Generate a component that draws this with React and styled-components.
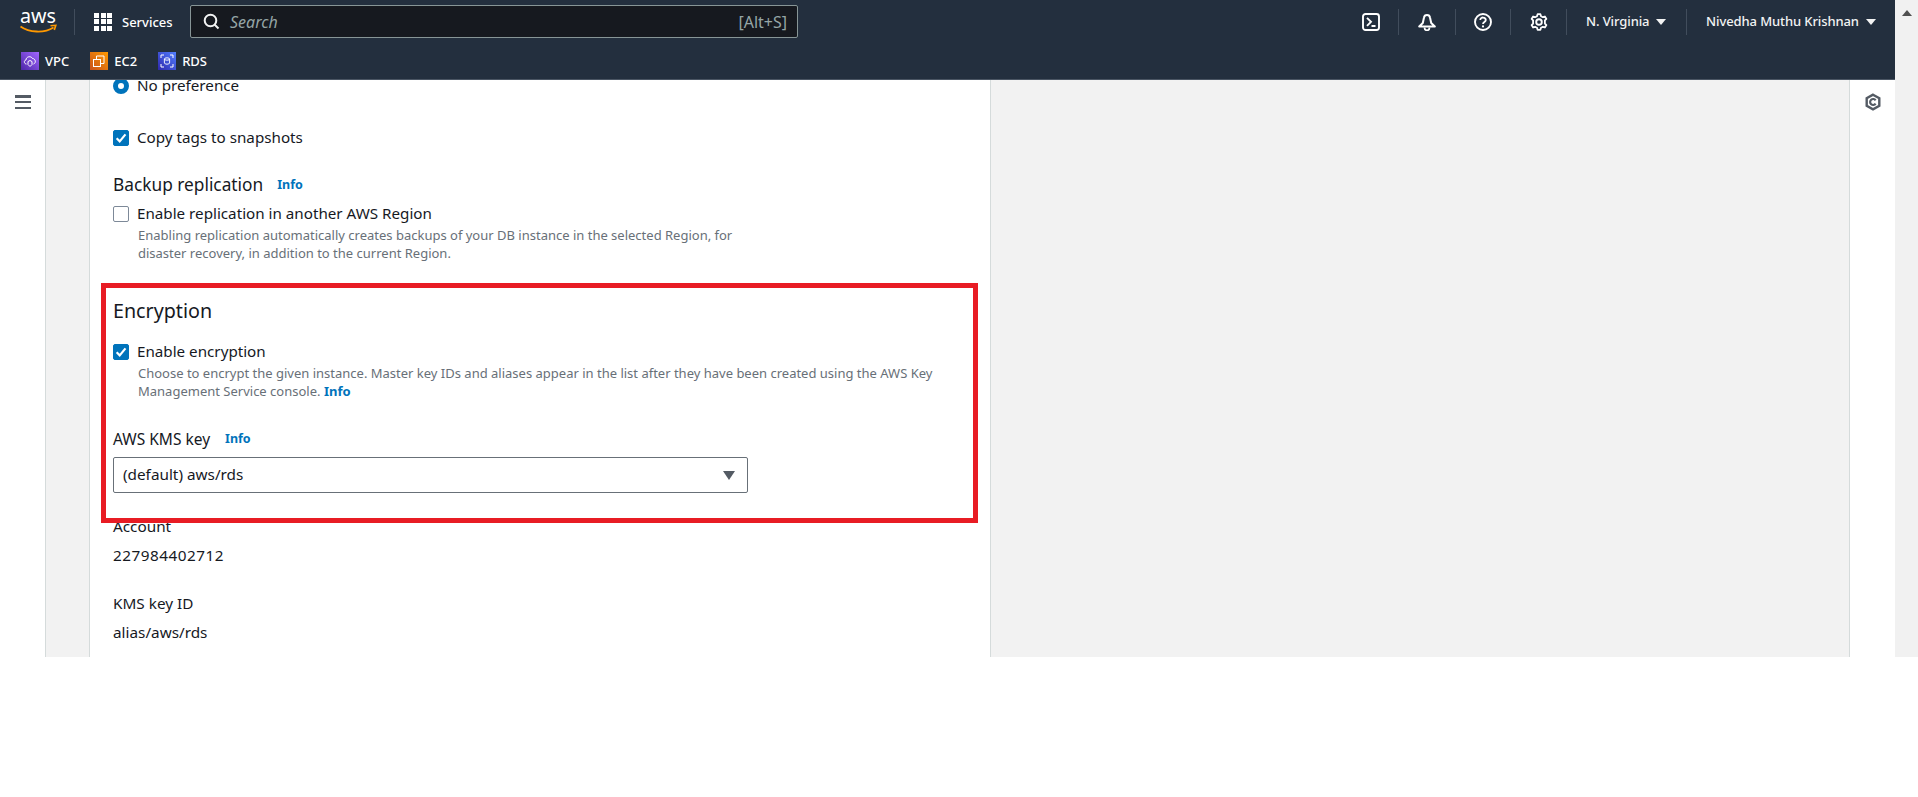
import React from "react";
import styled, { createGlobalStyle } from "styled-components";

const Global = createGlobalStyle`
  html, body { margin: 0; padding: 0; background: #fff; overflow: hidden; }
  * { box-sizing: border-box; }
  body { font-family: "Noto Sans", "Open Sans", sans-serif; font-size: 15.2px; color: #16191f; }
`;

const Frame = styled.div`
  display: flex;
  width: 1918px;
  height: 657px;
  overflow: hidden;
  background: #fff;
`;
const Viewport = styled.div`
  flex: 1;
  display: flex;
  flex-direction: column;
  min-width: 0;
`;
const Scrollbar = styled.div`
  width: 23px;
  background: #f1f1f1;
  display: flex;
  justify-content: center;
  padding-top: 10px;
`;
const ScrollArrow = styled.div`
  width: 0;
  height: 0;
  border-left: 5px solid transparent;
  border-right: 5px solid transparent;
  border-bottom: 6px solid #505050;
`;
const Header = styled.header`
  background: #232f3e;
  height: 80px;
  border-bottom: 1px solid #4a5563;
  color: #fff;
  display: flex;
  flex-direction: column;
  flex: none;
`;
const TopRow = styled.div`
  height: 44px;
  display: flex;
  align-items: center;
`;
const Logo = styled.div`
  width: 74px;
  padding-left: 20px;
  display: flex;
  align-items: center;
  height: 100%;
`;
const Sep = styled.div`
  width: 1px;
  height: 26px;
  background: #414d5c;
  flex: none;
`;
const ServicesBtn = styled.div`
  display: flex;
  align-items: center;
  gap: 10px;
  margin-left: 19px;
  width: 96px;
  font-size: 13px;
  font-weight: 500;
`;
const GridIcon = styled.div`
  display: grid;
  grid-template-columns: repeat(3, 5px);
  grid-auto-rows: 5px;
  gap: 1.5px;
  i { background: #fff; display: block; }
`;
const SearchBox = styled.div`
  width: 608px;
  height: 33px;
  background: #16191f;
  border: 1px solid #879596;
  border-radius: 2px;
  display: flex;
  align-items: center;
  padding: 0 10px 0 12px;
  color: #95a5a6;
  font-size: 16px;
`;
const SearchHint = styled.span`
  font-style: italic;
  margin-left: 10px;
  flex: 1;
`;
const RightTools = styled.div`
  margin-left: auto;
  display: flex;
  align-items: center;
  height: 100%;
`;
const ToolBtn = styled.div`
  width: ${(p) => p.$w}px;
  display: flex;
  justify-content: center;
  align-items: center;
`;
const MenuBtn = styled.div`
  display: flex;
  align-items: center;
  gap: 7px;
  padding-left: 19px;
  width: ${(p) => p.$w}px;
  font-size: 13px;
  font-weight: 500;
  letter-spacing: -0.1px;
  color: #f2f3f3;
  margin-top: -2px;
`;
const Caret = styled.span`
  width: 0;
  height: 0;
  border-left: 5px solid transparent;
  border-right: 5px solid transparent;
  border-top: 6px solid #f2f3f3;
  margin-top: 2px;
`;
const Favs = styled.div`
  display: flex;
  align-items: center;
  padding-left: 21px;
  height: 36px;
  font-size: 13px;
  font-weight: 500;
`;
const Fav = styled.div`
  display: flex;
  align-items: center;
  gap: 6px;
  margin-right: 21px;
`;
const FavIcon = styled.div`
  width: 18px;
  height: 18px;
  background: ${(p) => p.$bg};
  display: flex;
  align-items: center;
  justify-content: center;
`;
const Body = styled.div`
  flex: 1;
  display: flex;
  min-height: 0;
`;
const LeftRail = styled.aside`
  width: 46px;
  flex: none;
  border-right: 1px solid #d5dbdb;
  background: #fff;
  display: flex;
  justify-content: center;
  padding-top: 15px;
`;
const Burger = styled.div`
  width: 16px;
  height: 14px;
  display: flex;
  flex-direction: column;
  justify-content: space-between;
  i { display: block; height: 2.5px; background: #545b64; }
`;
const Gutter = styled.div`
  width: 43px;
  flex: none;
  background: #f2f2f2;
`;
const Panel = styled.main`
  width: 902px;
  flex: none;
  background: #fff;
  border-left: 1px solid #d5dbdb;
  border-right: 1px solid #d5dbdb;
  padding: 0 22px 0 23px;
  overflow: hidden;
`;
const Side = styled.div`
  flex: 1;
  background: #f2f2f2;
`;
const RightRail = styled.aside`
  width: 46px;
  flex: none;
  background: #fff;
  border-left: 1px solid #d5dbdb;
  display: flex;
  justify-content: center;
  padding-top: 13px;
`;
const Option = styled.div`
  display: flex;
  align-items: center;
  gap: 8px;
  height: 20px;
  margin-top: ${(p) => p.$mt || 0}px;
`;
const OptionText = styled.span`
  font-size: 15.2px;
  line-height: 18px;
  padding-bottom: 2px;
  color: #16191f;
`;
const Radio = styled.span`
  width: 16px;
  height: 16px;
  border-radius: 50%;
  border: 5px solid #0073bb;
  background: #fff;
  flex: none;
`;
const Box = styled.span`
  width: 16px;
  height: 16px;
  border-radius: 2px;
  background: ${(p) => (p.$on ? "#0073bb" : "#fff")};
  border: 1px solid ${(p) => (p.$on ? "#0073bb" : "#7d8998")};
  flex: none;
  display: flex;
  align-items: center;
  justify-content: center;
`;
const Heading = styled.div`
  display: flex;
  align-items: center;
  gap: 14px;
  margin-top: ${(p) => p.$mt}px;
  font-size: ${(p) => p.$size}px;
  line-height: 24px;
  color: #16191f;
`;
const Label = styled.div`
  display: flex;
  align-items: center;
  gap: 15px;
  font-size: 15.5px;
  line-height: 18px;
  padding-bottom: 2px;
  margin-top: ${(p) => p.$mt}px;
`;
const InfoLink = styled.a`
  color: #0073bb;
  font-size: ${(p) => p.$size || 12.5}px;
  font-weight: 700;
`;
const Desc = styled.div`
  font-size: 13px;
  line-height: 18px;
  color: #687078;
  margin-left: 25px;
  margin-top: 2px;
  width: ${(p) => p.$w}px;
`;
const Highlight = styled.div`
  position: relative;
  margin-top: ${(p) => p.$mt}px;
`;
const RedFrame = styled.div`
  position: absolute;
  left: -12px;
  top: 0;
  width: 877px;
  height: 240px;
  border: 5px solid #e81c24;
  pointer-events: none;
`;
const HighlightInner = styled.div`
  padding-top: 16px;
`;
const Select = styled.div`
  width: 635px;
  height: 36px;
  margin-top: 7px;
  border: 1px solid #687078;
  border-radius: 2px;
  display: flex;
  align-items: center;
  justify-content: space-between;
  padding: 0 12px 3px 9px;
  font-size: 15.3px;
`;
const SelectCaret = styled.span`
  width: 0;
  height: 0;
  border-left: 6px solid transparent;
  border-right: 6px solid transparent;
  border-top: 9px solid #545b64;
  margin-top: 3px;
`;
const Value = styled.div`
  font-size: 15.3px;
  line-height: 18px;
  padding-bottom: 2px;
  letter-spacing: ${(p) => (p.$digits ? "0.5px" : "0")};
  margin-top: ${(p) => p.$mt}px;
`;

const Check = () => (
  <svg width="12" height="12" viewBox="0 0 11 11">
    <path d="M1.5 5.8 L4.3 8.6 L9.6 2.2" fill="none" stroke="#fff" strokeWidth="2" />
  </svg>
);

export default function App() {
  return (
    <Frame>
      <Global />
      <Viewport>
        <Header>
          <TopRow>
            <Logo>
              <svg width="37" height="24" viewBox="0 0 37 24">
                <text x="0" y="13" fill="#fff" fontFamily="Noto Sans, sans-serif" fontSize="20" textLength="36" lengthAdjust="spacingAndGlyphs">aws</text>
                <path d="M0.5 16.5 C9 22.5 24 23.5 33.5 17.5" fill="none" stroke="#f90" strokeWidth="1.8" />
                <path d="M30.5 15.8 L35.8 15.3 L34.3 20" fill="none" stroke="#f90" strokeWidth="1.6" />
              </svg>
            </Logo>
            <Sep />
            <ServicesBtn>
              <GridIcon>
                {Array.from({ length: 9 }).map((_, i) => <i key={i} />)}
              </GridIcon>
              Services
            </ServicesBtn>
            <SearchBox>
              <svg width="17" height="17" viewBox="0 0 17 17">
                <circle cx="7.5" cy="7.5" r="5.8" fill="none" stroke="#f2f3f3" strokeWidth="2" />
                <path d="M11.5 11.5 L15.5 15.5" stroke="#f2f3f3" strokeWidth="2" />
              </svg>
              <SearchHint>Search</SearchHint>
              <span>[Alt+S]</span>
            </SearchBox>
            <RightTools>
              <ToolBtn $w={54}>
                <svg width="18" height="18" viewBox="0 0 18 18">
                  <rect x="1" y="1" width="16" height="16" rx="2.5" fill="none" stroke="#fff" strokeWidth="1.9" />
                  <path d="M5 4.8 L9 8.8 L5 12.8 M9.5 13 H13.5" fill="none" stroke="#fff" strokeWidth="1.9" />
                </svg>
              </ToolBtn>
              <Sep />
              <ToolBtn $w={56}>
                <svg width="18" height="18" viewBox="0 0 18 18">
                  <path d="M1.2 13.5 L4.8 10 L6 4.5 C6.5 1 11.5 1 12 4.5 L13.2 10 L16.8 13.5 Z" fill="none" stroke="#fff" strokeWidth="2" strokeLinejoin="round" />
                  <path d="M6.5 14.5 A2.5 2.8 0 0 0 11.5 14.5" fill="none" stroke="#fff" strokeWidth="1.8" />
                </svg>
              </ToolBtn>
              <Sep />
              <ToolBtn $w={54}>
                <svg width="18" height="18" viewBox="0 0 18 18">
                  <circle cx="9" cy="9" r="8" fill="none" stroke="#fff" strokeWidth="1.9" />
                  <path d="M6.3 7 C6.3 3.6 11.8 3.8 11.8 7 C11.8 9 9 9 9 11" fill="none" stroke="#fff" strokeWidth="1.8" />
                  <circle cx="9" cy="13.4" r="1.1" fill="#fff" />
                </svg>
              </ToolBtn>
              <Sep />
              <ToolBtn $w={55}>
                <svg width="18" height="18" viewBox="0 0 18 18">
                  <path d="M7.6 1.2 H10.4 L11 3.2 L12.9 4.2 L14.9 3.5 L16.4 5.9 L14.9 7.4 V10.6 L16.4 12.1 L14.9 14.5 L12.9 13.8 L11 14.8 L10.4 16.8 H7.6 L7 14.8 L5.1 13.8 L3.1 14.5 L1.6 12.1 L3.1 10.6 V7.4 L1.6 5.9 L3.1 3.5 L5.1 4.2 L7 3.2 Z" fill="none" stroke="#fff" strokeWidth="1.8" strokeLinejoin="round" />
                  <circle cx="9" cy="9" r="2.8" fill="none" stroke="#fff" strokeWidth="1.9" />
                </svg>
              </ToolBtn>
              <Sep />
              <MenuBtn $w={119}>N. Virginia <Caret /></MenuBtn>
              <Sep />
              <MenuBtn $w={208}>Nivedha Muthu Krishnan <Caret /></MenuBtn>
            </RightTools>
          </TopRow>
          <Favs>
            <Fav>
              <FavIcon $bg="linear-gradient(45deg,#4d27a8,#a166ff)">
                <svg width="14" height="14" viewBox="0 0 14 14">
                  <path d="M3.5 10 C1 10 .5 6.5 3 6 C3 2.5 8 1.5 9.5 4.5 C12.5 4.5 13.5 9 10.5 10" fill="none" stroke="#fff" strokeWidth="1" />
                  <path d="M5 7.5 L7 6.5 L9 7.5 V10.5 L7 12.5 L5 10.5 Z" fill="none" stroke="#fff" strokeWidth="1" />
                </svg>
              </FavIcon>
              VPC
            </Fav>
            <Fav>
              <FavIcon $bg="linear-gradient(45deg,#c8511b,#f90)">
                <svg width="14" height="14" viewBox="0 0 14 14">
                  <rect x="1.5" y="5.5" width="7" height="7" fill="none" stroke="#fff" strokeWidth="1" />
                  <path d="M4.5 5.5 V2 H12 V9.5 H8.5" fill="none" stroke="#fff" strokeWidth="1" />
                </svg>
              </FavIcon>
              EC2
            </Fav>
            <Fav>
              <FavIcon $bg="linear-gradient(45deg,#2e27ad,#527fff)">
                <svg width="14" height="14" viewBox="0 0 14 14">
                  <ellipse cx="7" cy="5" rx="2.6" ry="1.2" fill="none" stroke="#fff" strokeWidth=".9" />
                  <path d="M4.4 5 V9 C4.4 10.6 9.6 10.6 9.6 9 V5" fill="none" stroke="#fff" strokeWidth=".9" />
                  <path d="M1 4 V1 H4 M10 1 H13 V4 M13 10 V13 H10 M4 13 H1 V10" fill="none" stroke="#fff" strokeWidth="1" />
                </svg>
              </FavIcon>
              RDS
            </Fav>
          </Favs>
        </Header>
        <Body>
          <LeftRail>
            <Burger><i /><i /><i /></Burger>
          </LeftRail>
          <Gutter />
          <Panel>
            <Option $mt={-4}>
              <Radio />
              <OptionText>No preference</OptionText>
            </Option>
            <Option $mt={32}>
              <Box $on><Check /></Box>
              <OptionText>Copy tags to snapshots</OptionText>
            </Option>
            <Heading $mt={25} $size={17.3}>
              Backup replication <InfoLink>Info</InfoLink>
            </Heading>
            <Option $mt={7}>
              <Box />
              <OptionText>Enable replication in another AWS Region</OptionText>
            </Option>
            <Desc $w={620}>
              Enabling replication automatically creates backups of your DB instance in the selected Region, for disaster recovery, in addition to the current Region.
            </Desc>
            <Highlight $mt={21}>
              <RedFrame />
              <HighlightInner>
                <Heading $mt={0} $size={19.7}>Encryption</Heading>
                <Option $mt={19}>
                  <Box $on><Check /></Box>
                  <OptionText>Enable encryption</OptionText>
                </Option>
                <Desc $w={830}>
                  Choose to encrypt the given instance. Master key IDs and aliases appear in the list after they have been created using the AWS Key Management Service console. <InfoLink $size={13}>Info</InfoLink>
                </Desc>
                <Label $mt={30}>AWS KMS key <InfoLink>Info</InfoLink></Label>
                <Select>
                  (default) aws/rds
                  <SelectCaret />
                </Select>
              </HighlightInner>
            </Highlight>
            <Value $mt={24}>Account</Value>
            <Value $mt={9} $digits>227984402712</Value>
            <Value $mt={28}>KMS key ID</Value>
            <Value $mt={9}>alias/aws/rds</Value>
          </Panel>
          <Side />
          <RightRail>
            <svg width="18" height="18" viewBox="0 0 18 18">
              <path d="M9 1.7 L15.3 5.2 V12.8 L9 16.3 L2.7 12.8 V5.2 Z" fill="none" stroke="#545b64" strokeWidth="2.4" />
              <path d="M11.6 7.3 A3 3 0 1 0 11.6 10.7" fill="none" stroke="#545b64" strokeWidth="2.2" />
            </svg>
          </RightRail>
        </Body>
      </Viewport>
      <Scrollbar><ScrollArrow /></Scrollbar>
    </Frame>
  );
}
